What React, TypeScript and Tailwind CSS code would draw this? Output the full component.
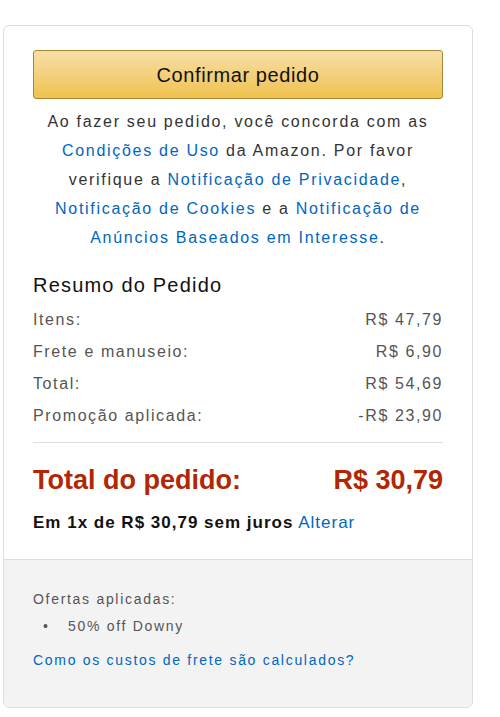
const font = { fontFamily: '"Liberation Sans", Arial, sans-serif' };

const rows = [
  { label: 'Itens:', value: 'R$ 47,79' },
  { label: 'Frete e manuseio:', value: 'R$ 6,90' },
  { label: 'Total:', value: 'R$ 54,69' },
  { label: 'Promoção aplicada:', value: '-R$ 23,90' },
];

function Link({ children }: { children: React.ReactNode }) {
  return <a className="text-[#0066c0] hover:underline cursor-pointer">{children}</a>;
}

export default function App() {
  return (
    <div className="bg-white min-h-[717px] pt-[25px] pl-[3px]" style={font}>
      <div className="w-[470px] rounded-[6px] border border-[#dddddd] overflow-hidden">
        <div className="px-[29px] pt-[24px] pb-[24px]">
          <button className="w-full h-[49px] rounded-[3px] border border-[#a88734] bg-gradient-to-b from-[#f7dfa5] to-[#f0c14b] text-[20px] text-[#111] tracking-[0.6px]">
            Confirmar pedido
          </button>

          <p className="mt-[8px] text-center text-[16px] leading-[29px] tracking-[1.7px] text-[#333]">
            Ao fazer seu pedido, você concorda com as <Link>Condições de Uso</Link> da Amazon. Por favor
            verifique a <Link>Notificação de Privacidade</Link>, <Link>Notificação de Cookies</Link> e a{' '}
            <Link>Notificação de Anúncios Baseados em Interesse</Link>.
          </p>

          <h3 className="mt-[19px] text-[20px] leading-[28px] tracking-[1.2px] text-[#111]">Resumo do Pedido</h3>

          <div className="mt-[5px]">
            {rows.map((r) => (
              <div key={r.label} className="flex justify-between text-[16px] leading-[32px] tracking-[1.6px] text-[#555]">
                <span>{r.label}</span>
                <span>{r.value}</span>
              </div>
            ))}
          </div>

          <div className="mt-[10px] border-t border-[#dddddd]" />

          <div className="mt-[20px] flex justify-between text-[27px] leading-[34px] font-bold text-[#b12704]">
            <span>Total do pedido:</span>
            <span>R$ 30,79</span>
          </div>

          <div className="mt-[14px] text-[17px] leading-[24px] tracking-[1px] text-[#111]">
            <span className="font-bold">Em 1x de R$ 30,79 sem juros</span> <Link>Alterar</Link>
          </div>
        </div>

        <div className="bg-[#f3f3f3] border-t border-[#dddddd] px-[29px] pt-[26px] pb-[33px] text-[14px] tracking-[1.7px]">
          <div className="leading-[27px] text-[#555]">Ofertas aplicadas:</div>
          <ul className="leading-[27px] text-[#555]">
            <li className="flex">
              <span className="w-[35px] pl-[10px]">•</span>
              <span>50% off Downy</span>
            </li>
          </ul>
          <div className="mt-[7px] leading-[27px]">
            <Link>Como os custos de frete são calculados?</Link>
          </div>
        </div>
      </div>
    </div>
  );
}
